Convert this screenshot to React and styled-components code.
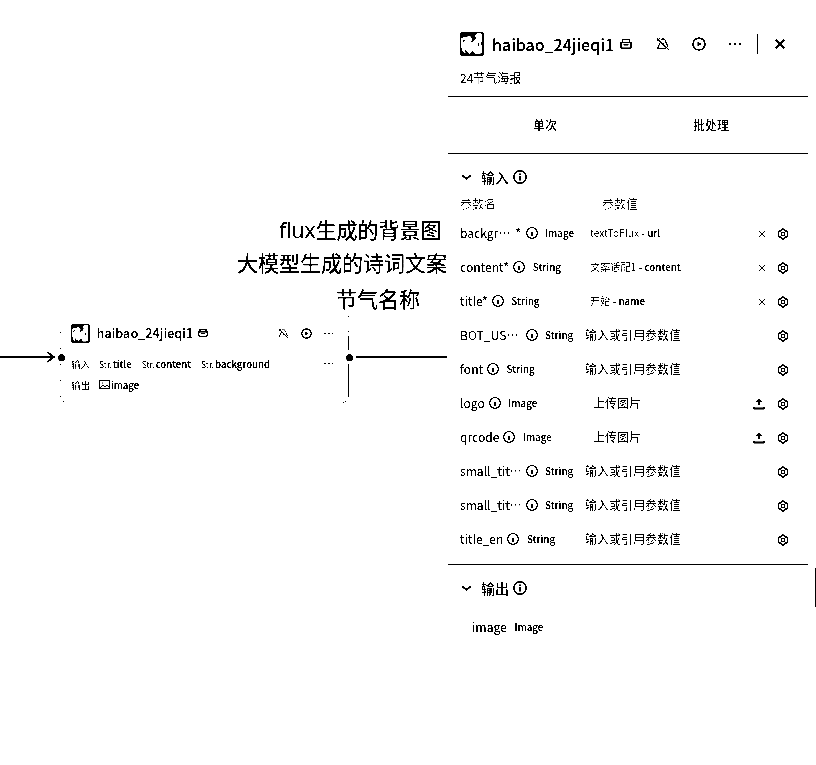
import React from "react";
import styled, { createGlobalStyle } from "styled-components";

const Global = createGlobalStyle`
  *{box-sizing:border-box}
  html,body{margin:0;background:#fff;overflow:hidden}
  body{font-family:"Noto Sans CJK SC",sans-serif;color:#000}
`;
const Page = styled.main`
  position:relative;width:816px;height:765px;background:#fff;overflow:hidden;
  display:flex;justify-content:flex-end;filter:grayscale(1) contrast(30);
`;
const Canvas = styled.section`position:relative;width:448px;flex:none;height:765px;overflow:hidden;`;
const Caption = styled.div`
  position:absolute;right:${p => p.$right}px;top:${p => p.$top}px;white-space:nowrap;
  font:400 21px/32px "Open Sans","Noto Sans CJK SC",sans-serif;-webkit-text-stroke:.2px #000;
`;
const Wires = styled.svg`position:absolute;left:0;top:310px;`;
const Node = styled.article`position:absolute;left:61px;top:316px;width:288px;height:88px;padding:7px 15px 0 10px;`;
const NodeHead = styled.header`display:flex;align-items:center;height:20px;margin-bottom:10px;`;
const NodeTitle = styled.h2`margin:0 5px 0 6.5px;font-size:12.7px;line-height:20px;font-weight:500;white-space:nowrap;-webkit-text-stroke:.1px #000;`;
const NodeTools = styled.div`display:flex;gap:11.5px;margin-left:auto;align-items:center;`;
const NodeLine = styled.div`display:flex;align-items:center;height:21px;font-size:9.6px;white-space:nowrap;`;
const NodeLabel = styled.span`width:28px;color:#222;`;
const Var = styled.span`display:flex;align-items:center;gap:1px;margin-right:10px;font-weight:500;font-size:9.6px;-webkit-text-stroke:.15px #000;`;
const Kind = styled.small`font-size:8.4px;font-weight:400;-webkit-text-stroke:0;`;
const Spacer = styled.span`margin-left:auto;display:flex;`;

const Panel = styled.aside`width:360px;flex:none;height:765px;`;
const Gutter = styled.div`width:8px;flex:none;padding-top:568px;`;
const Thumb = styled.div`width:1px;height:39px;background:#000;margin-left:7px;`;
const Head = styled.header`height:97px;padding:30px 22px 0 12px;border-bottom:1px solid #000;`;
const HeadRow = styled.div`display:flex;align-items:center;height:28px;`;
const Title = styled.h1`margin:0 6px 0 8px;width:122px;font-size:16px;line-height:28px;font-weight:500;white-space:nowrap;-webkit-text-stroke:.1px #000;`;
const Tools = styled.div`display:flex;align-items:center;margin-left:auto;gap:22px;`;
const Divider = styled.i`width:1px;height:20px;background:#000;margin:0 -6px 0 -7px;`;
const Sub = styled.p`margin:11px 0 0;font-size:12px;line-height:18px;`;
const Tabs = styled.nav`height:57px;display:flex;padding:0 14px;border-bottom:1px solid #000;`;
const Tab = styled.button`flex:1;border:0;padding:0;background:none;font:500 12px/56px "Noto Sans CJK SC",sans-serif;color:#000;`;
const Section = styled.section`
  padding:12px 0 0 12px;height:${p => p.$h}px;border-bottom:${p => (p.$line ? "1px solid #000" : "0")};
`;
const SectionHead = styled.div`display:flex;align-items:center;height:22px;font-size:14px;font-weight:500;gap:4px;`;
const SectionName = styled.span`margin-left:5px;`;
const Columns = styled.div`display:grid;grid-template-columns:142px 1fr;height:28px;line-height:30px;padding-top:1px;font-size:12px;color:#505050;`;
const Row = styled.div`display:flex;align-items:center;height:34px;`;
const Name = styled.div`width:125px;flex:none;display:flex;align-items:center;font-size:12.1px;line-height:20px;white-space:nowrap;-webkit-text-stroke:.1px #000;`;
const NameText = styled.span`width:${p => (p.$cut ? "61.5px" : "auto")};margin-right:4px;`;
const Star = styled.span`margin-left:5px;`;
const Type = styled.span`font-size:9.8px;margin-left:7.5px;font-weight:500;-webkit-text-stroke:.1px #000;`;
const Value = styled.div`
  flex:1;white-space:nowrap;line-height:20px;font-size:${p => (p.$kind === "ref" ? 10.2 : 12)}px;
  padding-left:${p => ({ ref: 5, upload: 8, empty: 0 }[p.$kind])}px;color:#111;
`;
const Source = styled.span`color:#333;`;
const Field = styled.span`font-weight:500;font-size:9.8px;-webkit-text-stroke:.2px #000;`;
const Actions = styled.div`display:flex;align-items:center;gap:${p => (p.$upload ? 12.5 : 11)}px;margin-right:19px;padding-top:1px;`;
const OutRow = styled.div`display:flex;align-items:center;height:34px;padding:0 0 0 12px;margin-top:11px;font-size:12.2px;-webkit-text-stroke:.1px #000;`;

const svg = (s, vb) => ({ width: s, height: s, viewBox: `0 0 ${vb} ${vb}`, fill: "none", stroke: "#000", style: { flex: "none" } });
const Info = ({ s = 12 }) => (
  <svg {...svg(s, 12)}><circle cx="6" cy="6" r="5.3" strokeWidth="1.25" /><path d={s > 12 ? "M6 5V9M6 3v1" : "M6 4.6V9"} strokeWidth="1.8" /></svg>
);
const Gear = () => (
  <svg {...svg(12, 12)} strokeWidth="1.5"><path d="M6 1 8 2.500l2.300.7V8.800L8 9.500 6 11 4 9.500l-2.300-.7V3.200L4 2.500Z" /><rect x="4.500" y="4.500" width="3" height="3" strokeWidth="1.100" /></svg>
);
const Cross = () => <svg {...svg(8, 8)} strokeWidth="1.2"><path d="M1 1l6 6M7 1L1 7" /></svg>;
const Upload = () => <svg {...svg(12, 12)} strokeWidth="1.8"><path d="M6 7.500V1.800M3.500 4 6 1.500 8.500 4M1 9v1.500h10v-1.500" /></svg>;
const Chevron = () => <svg {...svg(12, 12)} strokeWidth="1.9"><path d="M2.500 4.300 6.500 8 10.500 4.300" /></svg>;
const Box = ({ s = 12 }) => <svg {...svg(s, 12)} strokeWidth="1.5"><path d="M2.500 3.500V1.500h7v2M1 4.500h10v5l-1 .8H2l-1-.8ZM3.500 6.800h5" /></svg>;
const Bell = ({ s = 14 }) => <svg {...svg(s, 14)} strokeWidth="1.1"><path d="M1 1.500 13 13M4.500 5 1.500 11.500H10M5 3l2-1.500L9 3l3 7M7 6v2.500M1 4l3-3" /></svg>;
const Play = ({ s = 14 }) => <svg {...svg(s, 14)} strokeWidth="1.6"><circle cx="7" cy="7" r="6" /><path d="M5.500 4.300v5.400L9.500 7z" fill="#000" stroke="none" /></svg>;
const Dots = ({ s = 14 }) => <svg {...svg(s, 14)} fill="#000" stroke="none"><path d="M1 6h2v2H1zM6 6h2v2H6zM11 6h2v2h-2z" /></svg>;
const SmallDots = () => <svg {...svg(11, 11)} fill="#000" stroke="none"><path d="M1 5h2v1H1zM5 5h2v1H5zM9 5h1v1H9z" /></svg>;
const Close = () => <svg {...svg(12, 12)} strokeWidth="2"><path d="M1.800 1.800l8.400 8.400M10.200 1.800l-8.400 8.400" /></svg>;
const Picture = () => <svg {...svg(11, 11)}><path d="M.5 1.500h10v8H.5zM1 9l3-3 2 2 2-2 2 2M3 4h1" /></svg>;
const Avatar = ({ s }) => (
  <svg {...svg(s, 24)} stroke="none"><rect width="24" height="24" rx="3" fill="#000" />
    <path fill="#fff" d="M3 10l2-1 1-4 3-1 3 1v3l-2 3 2-1 3-2 1-2-1-2 2-3h4l1 2v18l-3 1h-4l-2-3-2 1-1 2-3-2-3 1-2-3z" />
    <path fill="#fff" d="M1 6h2v10H1zM3 5h4v3H3z" />
    <path d="M18 11h1v3h-1zM21 10h1v3h-1zM5 18l2 1v1H5zM11 3h4v3h-4z" fill="#000" /></svg>
);

const rows = [
  { n: "backgr…", cut: 1, req: 1, t: "Image", src: "textToFlux", f: "url" },
  { n: "content*", t: "String", src: "文案适配1", f: "content" },
  { n: "title*", t: "String", src: "开始", f: "name" },
  { n: "BOT_US…", cut: 1, t: "String" },
  { n: "font", t: "String" },
  { n: "logo", t: "Image", up: 1 },
  { n: "qrcode", t: "Image", up: 1 },
  { n: "small_tit…", cut: 1, t: "String" },
  { n: "small_tit…", cut: 1, t: "String" },
  { n: "title_en", t: "String" },
];

function Param({ r }) {
  const kind = r.src ? "ref" : r.up ? "upload" : "empty";
  return (
    <Row>
      <Name><NameText $cut={r.cut}>{r.n}{r.req ? <Star>*</Star> : null}</NameText><Info /><Type>{r.t}</Type></Name>
      <Value $kind={kind}>
        {kind === "ref" ? <><Source>{r.src}</Source> - <Field>{r.f}</Field></> : kind === "upload" ? "上传图片" : "输入或引用参数值"}
      </Value>
      <Actions $upload={r.up}>{r.src && <Cross />}{r.up && <Upload />}<Gear /></Actions>
    </Row>
  );
}

export default function App() {
  return (
    <><Global />
      <Page lang="zh-CN">
        <Canvas>
          <Caption $right={6.5} $top={214}>flux生成的背景图</Caption>
          <Caption $right={1} $top={247}>大模型生成的诗词文案</Caption>
          <Caption $right={28} $top={283}>节气名称</Caption>
          <Wires width="448" height="100" fill="none" stroke="#000">
            <path d="M0 47h54M356 47h91" strokeWidth="2" /><path d="M47 42l7 5-7 5" strokeWidth="1.8" />
            <circle cx="61.5" cy="47.5" r="3.5" fill="#000" stroke="none" /><circle cx="349.5" cy="47.5" r="3.5" fill="#000" stroke="none" />
            <path d="M348.500 26v14M348.500 54v33" />
            <path d="M60 22.500h1M60 38.500h1M60 54.500h1M60 70.500h1M60 86.500h1M63 91.500h1M348 6.500h1M348 21.500h1M345 91.500h1M343 92.500h1" />
          </Wires>
          <Node>
            <NodeHead><Avatar s={19} /><NodeTitle>haibao_24jieqi1</NodeTitle><Box s={10} />
              <NodeTools><Bell s={11} /><Play s={11} /><SmallDots /></NodeTools></NodeHead>
            <NodeLine><NodeLabel>输入</NodeLabel><Var><Kind>Str.</Kind>title</Var><Var><Kind>Str.</Kind>content</Var><Var><Kind>Str.</Kind>background</Var><Spacer><SmallDots /></Spacer></NodeLine>
            <NodeLine><NodeLabel>输出</NodeLabel><Var><Picture />image</Var></NodeLine>
          </Node>
        </Canvas>
        <Panel>
          <Head>
            <HeadRow><Avatar s={24} /><Title>haibao_24jieqi1</Title><Box />
              <Tools><Bell /><Play /><Dots /><Divider /><Close /></Tools></HeadRow>
            <Sub>24节气海报</Sub>
          </Head>
          <Tabs><Tab>单次</Tab><Tab>批处理</Tab></Tabs>
          <Section $h={411} $line>
            <SectionHead><Chevron /><SectionName>输入</SectionName><Info s={14} /></SectionHead>
            <Columns><span>参数名</span><span>参数值</span></Columns>
            {rows.map((r, i) => <Param key={i} r={r} />)}
          </Section>
          <Section $h={200}>
            <SectionHead><Chevron /><SectionName>输出</SectionName><Info s={14} /></SectionHead>
            <OutRow>image<Type>Image</Type></OutRow>
          </Section>
        </Panel>
        <Gutter><Thumb /></Gutter>
      </Page></>
  );
}
